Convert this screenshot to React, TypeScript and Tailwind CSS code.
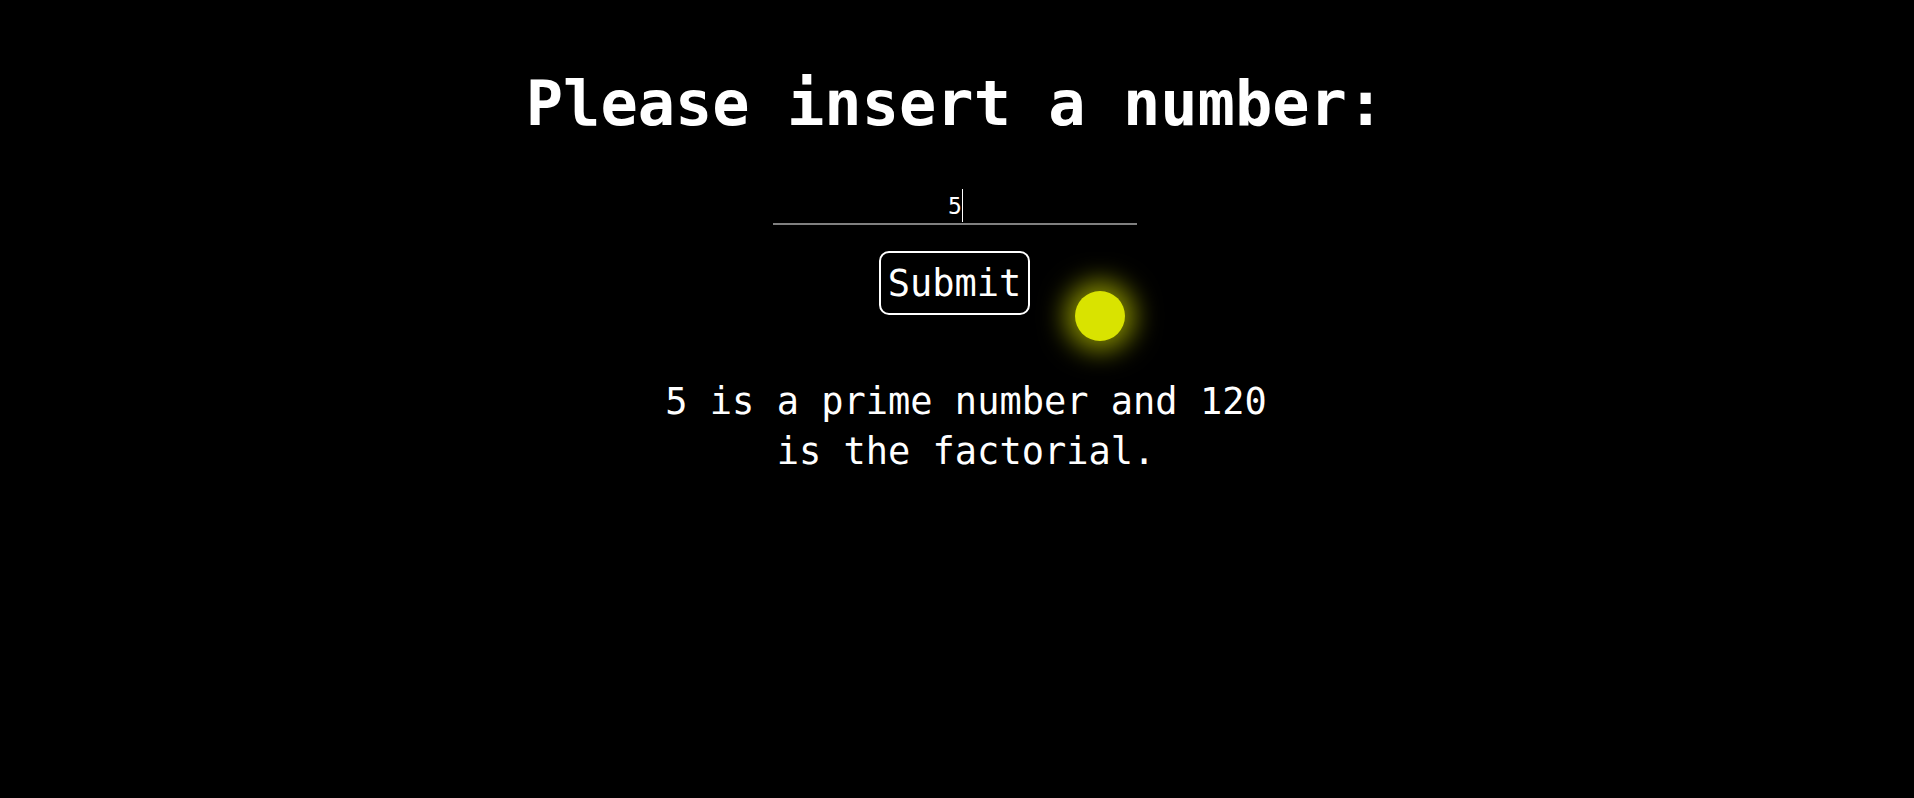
import React, { useState } from 'react';

const mono = "font-['DejaVu_Sans_Mono','Liberation_Mono',monospace]";

const isPrime = (n: number) => {
  if (n < 2 || !Number.isInteger(n)) return false;
  for (let i = 2; i * i <= n; i++) if (n % i === 0) return false;
  return true;
};

const factorial = (n: number) => {
  let r = 1;
  for (let i = 2; i <= n; i++) r *= i;
  return r;
};

const App: React.FC = () => {
  const [value, setValue] = useState('5');
  const [result, setResult] = useState<number | null>(5);

  const handleSubmit = (e: React.FormEvent) => {
    e.preventDefault();
    const n = parseInt(value, 10);
    if (!isNaN(n)) setResult(n);
  };

  return (
    <div className={`relative min-h-screen bg-black text-white ${mono}`}>
      <form onSubmit={handleSubmit} className="flex flex-col items-center">
        {/* Title */}
        <h1 className="mt-[73px] text-[62px] leading-none font-bold -ml-[4px]">Please insert a number:</h1>

        {/* Number input with caret */}
        <div className="relative mt-[54px] -ml-[4px]">
          <input
            type="text"
            autoFocus
            value={value}
            onChange={(e) => setValue(e.target.value)}
            className="block w-[364px] h-[36px] bg-transparent text-center text-[23px] leading-[34px] text-white caret-white outline-none border-0 border-b-2 border-[#808080]"
          />
          <span aria-hidden className="pointer-events-none absolute left-[189px] top-0 h-[33px] w-px bg-white" />
        </div>

        <button
          type="submit"
          className="mt-[26px] -ml-[5px] rounded-[10px] border-2 border-white px-[7px] pt-[9px] pb-[7px] text-[37px] leading-[44px] text-white"
        >
          Submit
        </button>

        {/* Result */}
        {result !== null && (
          <p className="mt-[62px] ml-[18px] w-[640px] text-center text-[37px] leading-[50px]">
            {result} is {isPrime(result) ? 'a' : 'not a'} prime number and {factorial(result)} is the factorial.
          </p>
        )}
      </form>

      {/* Glowing cursor dot */}
      <div className="absolute left-[1075px] top-[291px] h-[50px] w-[50px] rounded-full bg-[#d9e300] shadow-[0_0_26px_10px_rgba(217,227,0,0.6)]" />
    </div>
  );
};

export default App;
